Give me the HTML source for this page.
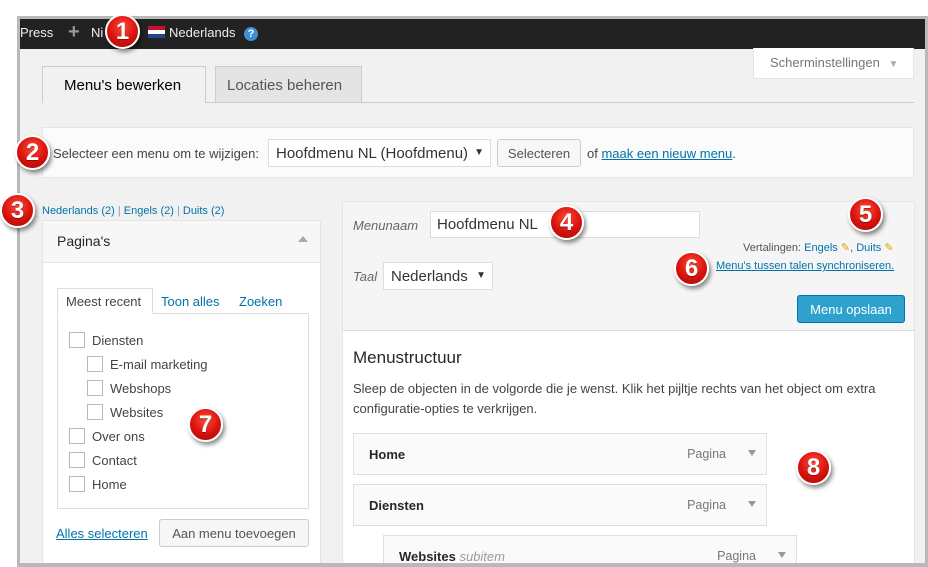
<!DOCTYPE html>
<html style="overflow:hidden;height:567px"><head><meta charset="utf-8"><style>
*{box-sizing:border-box;margin:0;padding:0}
html,body{width:928px;height:567px;overflow:hidden}
body{background:#fff;position:relative;font-family:"Liberation Sans","DejaVu Sans",sans-serif;font-size:13px;color:#444}
#wrap{position:absolute;left:0;top:0;width:928px;height:567px;overflow:hidden}
.a{position:absolute}
#frame{left:17px;top:16px;width:911px;height:551px;border:3px solid #b9b9b9;border-bottom:none;background:#f1f1f1}
.bar{left:20px;top:19px;width:905px;height:30px;background:#222;color:#eee;font-size:13px}
.lk{color:#0073aa}
.u{text-decoration:underline}
.box{background:#fff;border:1px solid #e5e5e5}
.btn{background:#f7f7f7;border:1px solid #ccc;border-radius:3px;color:#555;font-size:13px;text-align:center}
.sel{background:#fff;border:1px solid #ddd;color:#333;font-size:15px}
.cb{width:16px;height:16px;border:1px solid #b4b9be;background:#fff}
.it{background:#fafafa;border:1px solid #dfdfdf}
.it b{position:absolute;left:15px;top:13px;font-size:13px;color:#23282d}
.it span.p{position:absolute;right:40px;top:13px;color:#777;font-size:12.5px}
.it span.t{position:absolute;right:10px;top:16px;width:0;height:0;border-left:4px solid transparent;border-right:4px solid transparent;border-top:6px solid #999}
.ball{width:35px;height:35px;border-radius:50%;background:radial-gradient(circle at 50% 35%,#ff4a3a 0%,#d8120c 55%,#a00a06 100%);border:2px solid #fff;box-shadow:2px 3px 4px rgba(0,0,0,.45);color:#fff;font-weight:bold;font-size:24px;text-align:center;line-height:31px;font-family:"Liberation Sans",sans-serif;text-shadow:0 1px 1px rgba(0,0,0,.4)}
</style></head><body><div id="wrap">
<div class="a" id="frame"></div>
<div class="a bar">
 <span class="a" style="left:0;top:6px">Press</span>
 <span class="a" style="left:48px;top:2px;font-size:20px;color:#999;font-weight:bold">+</span>
 <span class="a" style="left:71px;top:6px">Ni</span>
 <div class="a" style="left:128px;top:7px;width:17px;height:12px;background:linear-gradient(#c8102e 33%,#fff 33%,#fff 66%,#21468b 66%)"></div>
 <span class="a" style="left:149px;top:6px">Nederlands</span>
 <div class="a" style="left:224px;top:8px;width:14px;height:14px;border-radius:50%;background:#3d8fd6;color:#fff;font-size:11px;font-weight:bold;text-align:center;line-height:14px">?</div>
</div>
<div class="a box" style="left:753px;top:48px;width:161px;height:31px;border-top:none;color:#72777c;font-size:13px;padding:7px 0 0 16px">Scherminstellingen <span style="color:#aaa;font-size:10px;margin-left:5px">▼</span></div>
<div class="a" style="left:42px;top:102px;width:872px;height:1px;background:#ccc"></div>
<div class="a" style="left:42px;top:66px;width:164px;height:37px;background:#f1f1f1;border:1px solid #ccc;border-bottom:none;font-size:15px;color:#000;padding:10px 0 0 21px">Menu's bewerken</div>
<div class="a" style="left:215px;top:66px;width:147px;height:36px;background:#e4e4e4;border:1px solid #ccc;border-bottom:none;font-size:15px;color:#555;padding:10px 0 0 11px">Locaties beheren</div>
<div class="a" style="left:42px;top:127px;width:872px;height:51px;background:#fbfbfb;border:1px solid #e5e5e5"></div>
<span class="a" style="left:53px;top:146px;color:#444">Selecteer een menu om te wijzigen:</span>
<div class="a sel" style="left:268px;top:139px;width:223px;height:28px;padding:5px 0 0 7px">Hoofdmenu NL (Hoofdmenu)<span style="position:absolute;right:6px;top:7px;font-size:10px">▼</span></div>
<div class="a btn" style="left:497px;top:139px;width:84px;height:28px;padding-top:6px">Selecteren</div>
<span class="a" style="left:587px;top:146px">of <span class="lk u">maak een nieuw menu</span>.</span>
<span class="a" style="left:42px;top:205px;font-size:11px;color:#999"><span class="lk">Nederlands (2)</span> | <span class="lk">Engels (2)</span> | <span class="lk">Duits (2)</span></span>
<div class="a" style="left:42px;top:220px;width:279px;height:360px;background:#fff;border:1px solid #e5e5e5"></div>
<div class="a" style="left:43px;top:221px;width:277px;height:42px;background:#f7f7f7;border-bottom:1px solid #e5e5e5;font-size:14px;color:#23282d;padding:12px 0 0 14px">Pagina's<span style="position:absolute;right:12px;top:15px;width:0;height:0;border-left:5px solid transparent;border-right:5px solid transparent;border-bottom:6px solid #aaa"></span></div>
<div class="a" style="left:57px;top:313px;width:252px;height:196px;border:1px solid #ddd"></div>
<div class="a" style="left:57px;top:288px;width:96px;height:26px;background:#fff;border:1px solid #ddd;border-bottom:1px solid #fff;padding:5px 0 0 8px;color:#444">Meest recent</div>
<span class="a lk" style="left:161px;top:294px">Toon alles</span>
<span class="a lk" style="left:239px;top:294px">Zoeken</span>
<div class="a cb" style="left:69px;top:332px"></div><span class="a" style="left:92px;top:333px">Diensten</span>
<div class="a cb" style="left:87px;top:356px"></div><span class="a" style="left:110px;top:357px">E-mail marketing</span>
<div class="a cb" style="left:87px;top:380px"></div><span class="a" style="left:110px;top:381px">Webshops</span>
<div class="a cb" style="left:87px;top:404px"></div><span class="a" style="left:110px;top:405px">Websites</span>
<div class="a cb" style="left:69px;top:428px"></div><span class="a" style="left:92px;top:429px">Over ons</span>
<div class="a cb" style="left:69px;top:452px"></div><span class="a" style="left:92px;top:453px">Contact</span>
<div class="a cb" style="left:69px;top:476px"></div><span class="a" style="left:92px;top:477px">Home</span>
<span class="a lk u" style="left:56px;top:526px">Alles selecteren</span>
<div class="a btn" style="left:159px;top:519px;width:150px;height:28px;padding-top:6px">Aan menu toevoegen</div>
<div class="a" style="left:342px;top:201px;width:573px;height:380px;background:#fff;border:1px solid #e5e5e5"></div>
<div class="a" style="left:343px;top:202px;width:571px;height:129px;background:#f5f5f5;border-bottom:1px solid #ddd"></div>
<span class="a" style="left:353px;top:218px;font-style:italic;color:#666">Menunaam</span>
<div class="a sel" style="left:430px;top:211px;width:270px;height:27px;padding:4px 0 0 6px">Hoofdmenu NL</div>
<span class="a" style="left:353px;top:269px;font-style:italic;color:#666">Taal</span>
<div class="a sel" style="left:383px;top:262px;width:110px;height:28px;padding:5px 0 0 7px">Nederlands<span style="position:absolute;right:6px;top:7px;font-size:10px">▼</span></div>
<span class="a" style="left:743px;top:241px;font-size:11px;color:#555">Vertalingen: <span class="lk">Engels</span> <span style="color:#d9a400">✎</span>, <span class="lk">Duits</span> <span style="color:#d9a400">✎</span></span>
<span class="a lk u" style="left:716px;top:260px;font-size:11px">Menu's tussen talen synchroniseren.</span>
<div class="a" style="left:797px;top:295px;width:108px;height:28px;background:#2ea2cc;border:1px solid #0074a2;border-radius:3px;color:#fff;text-align:center;padding-top:6px">Menu opslaan</div>
<span class="a" style="left:353px;top:348px;font-size:17px;color:#23282d">Menustructuur</span>
<span class="a" style="left:353px;top:379px;line-height:20px;width:560px">Sleep de objecten in de volgorde die je wenst. Klik het pijltje rechts van het object om extra configuratie-opties te verkrijgen.</span>
<div class="a it" style="left:353px;top:433px;width:414px;height:42px"><b>Home</b><span class="p">Pagina</span><span class="t"></span></div>
<div class="a it" style="left:353px;top:484px;width:414px;height:42px"><b>Diensten</b><span class="p">Pagina</span><span class="t"></span></div>
<div class="a it" style="left:383px;top:535px;width:414px;height:42px"><b>Websites <i style="font-weight:normal;color:#999">subitem</i></b><span class="p">Pagina</span><span class="t"></span></div>
<div class="a" style="left:17px;top:563px;width:911px;height:4px;background:#b9b9b9"></div>
<div class="a" style="left:925px;top:16px;width:3px;height:551px;background:#b9b9b9"></div>
<div class="a ball" style="left:105px;top:14px">1</div>
<div class="a ball" style="left:15px;top:135px">2</div>
<div class="a ball" style="left:0px;top:193px">3</div>
<div class="a ball" style="left:549px;top:205px">4</div>
<div class="a ball" style="left:848px;top:197px">5</div>
<div class="a ball" style="left:674px;top:251px">6</div>
<div class="a ball" style="left:188px;top:407px">7</div>
<div class="a ball" style="left:796px;top:450px">8</div>
</div></body></html>
